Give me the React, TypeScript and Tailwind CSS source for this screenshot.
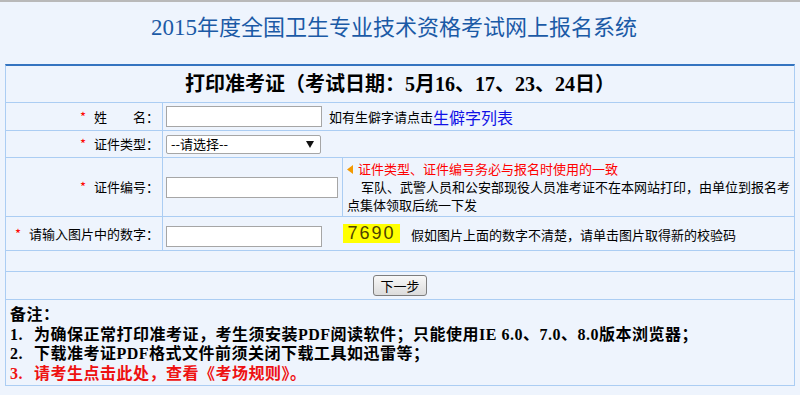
const line = 'border-b border-[#abcdf3]';
const labelCell =
  'flex w-[157px] shrink-0 items-center justify-end border-r border-[#abcdf3] pr-[3px]';
const input = 'h-[21px] border border-[#a6a6a6] bg-white';

const Star = () => <span className="mr-[8px] text-[#ff0000]">*</span>;

export default function App() {
  return (
    <div className="min-h-screen border-t-2 border-[#b9b9b9] bg-[#eef4fd] font-['Noto_Sans_CJK_SC',sans-serif] text-[13px] text-black">
      <div className="h-[62px] pt-[7px] text-center text-[#1b5aa6]">
        <h1 className="inline-block pr-[12px] text-[22px] leading-[32px]">
          <span className="font-['Liberation_Serif'] text-[23px]">2015</span>
          年度全国卫生专业技术资格考试网上报名系统
        </h1>
      </div>

      <div className="mx-[5px] border-x border-b border-t-2 border-x-[#abcdf3] border-b-[#abcdf3] border-t-[#3474c0]">
        <div
          className={`flex h-[37px] items-center justify-center font-['Liberation_Serif','Noto_Sans_CJK_SC',serif] text-[20px] font-bold ${line}`}
        >
          打印准考证（考试日期：5月16、17、23、24日）
        </div>

        <div className={`flex h-[28px] ${line}`}>
          <div className={labelCell}>
            <Star />
            姓　　名：
          </div>
          <div className="flex items-center pl-[3px]">
            <div className={`${input} w-[156px]`} />
            <span className="ml-[7px]">如有生僻字请点击</span>
            <a className="text-[16px] text-[#1010e6]">生僻字列表</a>
          </div>
        </div>

        <div className={`flex h-[27px] ${line}`}>
          <div className={labelCell}>
            <Star />
            证件类型：
          </div>
          <div className="flex items-center pl-[3px]">
            <div className="flex h-[19px] w-[155px] items-center justify-between rounded-[2px] border border-[#a6a6a6] bg-white pl-[4px] pr-[6px]">
              <span>--请选择--</span>
              <svg width="8" height="7" viewBox="0 0 8 7">
                <polygon points="0,0 8,0 4,7" fill="#111" />
              </svg>
            </div>
          </div>
        </div>

        <div className={`flex h-[59px] ${line}`}>
          <div className={labelCell}>
            <Star />
            证件编号：
          </div>
          <div className="flex w-[180px] shrink-0 items-center border-r border-[#abcdf3] pl-[3px]">
            <div className={`${input} w-[172px]`} />
          </div>
          <div className="flex flex-1 flex-col justify-center pl-[4px] leading-[18px]">
            <div className="flex items-center text-[#ff0000]">
              <svg width="6" height="9" viewBox="0 0 6 9" className="mr-[5px]">
                <polygon points="6,0 6,9 0,4.5" fill="#f39a00" />
              </svg>
              证件类型、证件编号务必与报名时使用的一致
            </div>
            <p className="indent-[14px]">
              军队、武警人员和公安部现役人员准考证不在本网站打印，由单位到报名考点集体领取后统一下发
            </p>
          </div>
        </div>

        <div className={`flex h-[34px] ${line}`}>
          <div className={labelCell}>
            <Star />
            请输入图片中的数字：
          </div>
          <div className="flex items-center pl-[3px]">
            <div className={`${input} mt-[6px] w-[156px]`} />
            <div className="ml-[21px] flex h-[19px] w-[57px] items-center justify-center bg-[#ffff00] font-['Liberation_Sans',sans-serif] text-[18px] tracking-[2px] text-[#4d4200]">
              7690
            </div>
            <span className="ml-[11px] mt-[3px]">假如图片上面的数字不清楚，请单击图片取得新的校验码</span>
          </div>
        </div>

        <div className={`h-[21px] ${line}`} />

        <div className={`flex h-[28px] items-center justify-center ${line}`}>
          <button className="h-[21px] w-[54px] rounded-[3px] border border-[#7d7d7d] bg-gradient-to-b from-[#f8f8f8] to-[#dcdcdc] text-[13px] leading-none">
            下一步
          </button>
        </div>

        <div className="h-[85px] pl-[4px] pt-[5px] font-['Liberation_Serif','Noto_Sans_CJK_SC',serif] text-[16px] font-bold leading-[19.5px] tracking-[0.5px]">
          <p>备注：</p>
          <p>
            <span className="inline-block w-[24px]">1.</span>
            为确保正常打印准考证，考生须安装PDF阅读软件；只能使用IE 6.0、7.0、8.0版本浏览器；
          </p>
          <p>
            <span className="inline-block w-[24px]">2.</span>
            下载准考证PDF格式文件前须关闭下载工具如迅雷等；
          </p>
          <p className="text-[#ee1111]">
            <span className="inline-block w-[24px]">3.</span>
            请考生点击此处，查看《考场规则》。
          </p>
        </div>
      </div>
    </div>
  );
}
